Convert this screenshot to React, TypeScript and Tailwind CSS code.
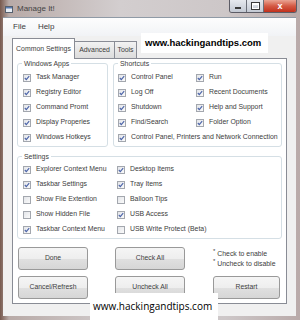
import React from "react";

function Box({ checked }: { checked: boolean }) {
  return (
    <span className="w-[8px] h-[8px] shrink-0 border border-[#a3a7ae] bg-[linear-gradient(135deg,#e3e5e9_0%,#fafafa_100%)] flex items-center justify-center">
      {checked && (
        <svg width="6" height="6" viewBox="0 0 6 6">
          <path d="M0.8 3 L2.3 4.6 L5.2 1.1" fill="none" stroke="#4a63a8" strokeWidth="1.1" />
        </svg>
      )}
    </span>
  );
}

function Check({ label, checked = true, className = "" }: { label: string; checked?: boolean; className?: string }) {
  return (
    <div className={`flex items-center gap-[5px] h-[15px] whitespace-nowrap ${className}`}>
      <Box checked={checked} />
      <span>{label}</span>
    </div>
  );
}

function Group({ title, className = "", children }: { title: string; className?: string; children: React.ReactNode }) {
  return (
    <fieldset className={`border border-[#d5dfe5] rounded-[3px] ${className}`}>
      <legend className="ml-[4px] px-[2px] leading-[9px]">{title}</legend>
      {children}
    </fieldset>
  );
}

function WinButton({ label }: { label: string }) {
  return (
    <button className="h-[23px] w-full rounded-[3px] border border-[#999] bg-[linear-gradient(#f5f5f5_0%,#eeeeee_50%,#e0e0e0_51%,#d6d6d6_100%)] text-[6.8px] text-[#404040]">
      {label}
    </button>
  );
}

export default function App() {
  return (
    <div className="relative w-[300px] h-[320px] overflow-hidden bg-[linear-gradient(90deg,#77594e_0%,#b8aaa7_3%,#d3cecf_40%,#cdc7c8_75%,#b9aaa9_100%)] font-['Liberation_Sans',Arial,sans-serif] text-[#3c3c3c]">
      {/* Title bar */}
      <div className="h-[17px] flex items-start">
        <svg className="ml-[5px] mt-[6px]" width="8" height="7" viewBox="0 0 8 7">
          <rect x="0.5" y="0.5" width="7" height="6" fill="#e8eef5" stroke="#55606e" />
          <rect x="1" y="1" width="6" height="1.5" fill="#5a7bb0" />
        </svg>
        <span className="ml-[4px] mt-[4px] text-[8px] leading-[10px] text-[#444]">Manage It!</span>
        <div className="ml-auto mr-[3px] flex h-[13px] rounded-b-[3px] border border-t-0 border-[#5c5c66] overflow-hidden">
          <div className="w-[17px] bg-[linear-gradient(#e6e9ee,#c3c9d3)] border-r border-[#6b6f78] flex items-end justify-center pb-[3px]">
            <span className="w-[6px] h-[2px] bg-white border border-[#3b3b3b]" />
          </div>
          <div className="w-[17px] bg-[linear-gradient(#e6e9ee,#c3c9d3)] border-r border-[#6b6f78] flex items-center justify-center">
            <span className="w-[7px] h-[6px] border-[1.5px] border-t-[2px] border-[#fff] outline outline-1 outline-[#3b3b3b]" />
          </div>
          <div className="w-[32px] bg-[linear-gradient(#e9a493,#d45a44_50%,#c1301c)] flex items-center justify-center">
            <span className="text-white text-[9px] font-bold leading-none">x</span>
          </div>
        </div>
      </div>

      {/* Client area */}
      <div className="ml-[3px] w-[293px] h-[299px] bg-[#f0f0f0] border-t border-[#8f9aa6]">
        {/* Menu */}
        <div className="h-[18px] flex items-center pl-[10px] gap-[12px] text-[8px] bg-[linear-gradient(#fdfdfd,#f1f3f6)]">
          <span>File</span>
          <span>Help</span>
        </div>

        {/* Tabs */}
        <div className="h-[22px] pl-[9px] flex items-end text-[6.9px]">
          <div className="relative z-10 -mb-px h-[21px] w-[63px] bg-white border border-b-0 border-[#898c95] flex items-center justify-center">
            Common Settings
          </div>
          <div className="h-[17px] w-[40px] bg-[linear-gradient(#f2f2f2,#dcdcdc)] border border-l-0 border-b-0 border-[#898c95] flex items-center justify-center">
            Advanced
          </div>
          <div className="h-[17px] w-[22px] bg-[linear-gradient(#f2f2f2,#dcdcdc)] border border-l-0 border-b-0 border-[#898c95] flex items-center justify-center">
            Tools
          </div>
        </div>

        {/* Panel */}
        <div className="ml-[9px] w-[275px] h-[246px] bg-white border border-[#898c95] px-[4px] text-[6.9px]">
          <div className="flex gap-[5px]">
            <Group title="Windows Apps" className="w-[91px] h-[88px]">
              <div className="pl-[5px] pt-[2px]">
                <Check label="Task Manager" />
                <Check label="Registry Editor" />
                <Check label="Command Promt" />
                <Check label="Display Properies" />
                <Check label="Windows Hotkeys" />
              </div>
            </Group>
            <Group title="Shortcuts" className="w-[169px] h-[88px]">
              <div className="pl-[4px] pt-[2px] grid grid-cols-[78px_1fr]">
                <Check label="Control Panel" />
                <Check label="Run" />
                <Check label="Log Off" />
                <Check label="Recent Documents" />
                <Check label="Shutdown" />
                <Check label="Help and Support" />
                <Check label="Find/Search" />
                <Check label="Folder Option" />
                <Check label="Control Panel, Printers and Network Connection" className="col-span-2" />
              </div>
            </Group>
          </div>

          <Group title="Settings" className="mt-[5px] w-[265px] h-[87px]">
            <div className="pl-[5px] pt-[1px] grid grid-cols-[94px_1fr]">
              <Check label="Explorer Context Menu" />
              <Check label="Desktop Items" />
              <Check label="Taskbar Settings" />
              <Check label="Tray Items" />
              <Check label="Show File Extention" checked={false} />
              <Check label="Balloon Tips" checked={false} />
              <Check label="Show Hidden File" checked={false} />
              <Check label="USB Access" />
              <Check label="Taskbar Context Menu" />
              <Check label="USB Write Protect (Beta)" checked={false} />
            </div>
          </Group>

          <div className="mt-[8px] flex">
            <div className="ml-[1px] w-[70px] flex flex-col gap-[6px]">
              <WinButton label="Done" />
              <WinButton label="Cancel/Refresh" />
            </div>
            <div className="ml-[27px] w-[70px] flex flex-col gap-[6px]">
              <WinButton label="Check All" />
              <WinButton label="Uncheck All" />
            </div>
            <div className="ml-[28px] w-[67px] flex flex-col gap-[6px]">
              <div className="h-[23px] flex flex-col justify-center leading-[10px] whitespace-nowrap">
                <span><sup className="text-[6px]">*</sup> Check to enable</span>
                <span><sup className="text-[6px]">*</sup> Uncheck to disable</span>
              </div>
              <WinButton label="Restart" />
            </div>
          </div>
        </div>
      </div>

      {/* Watermarks */}
      <div className="absolute left-[141px] top-[33px] w-[127px] h-[20px] bg-white flex items-center pl-[4px] font-bold text-[9.5px] text-black">
        www.hackingandtips.com
      </div>
      <div className="absolute left-[90px] top-[293px] w-[128px] h-[27px] bg-white flex items-center pl-[3px] font-['Open_Sans',sans-serif] text-[10px] text-black">
        www.hackingandtips.com
      </div>
    </div>
  );
}
